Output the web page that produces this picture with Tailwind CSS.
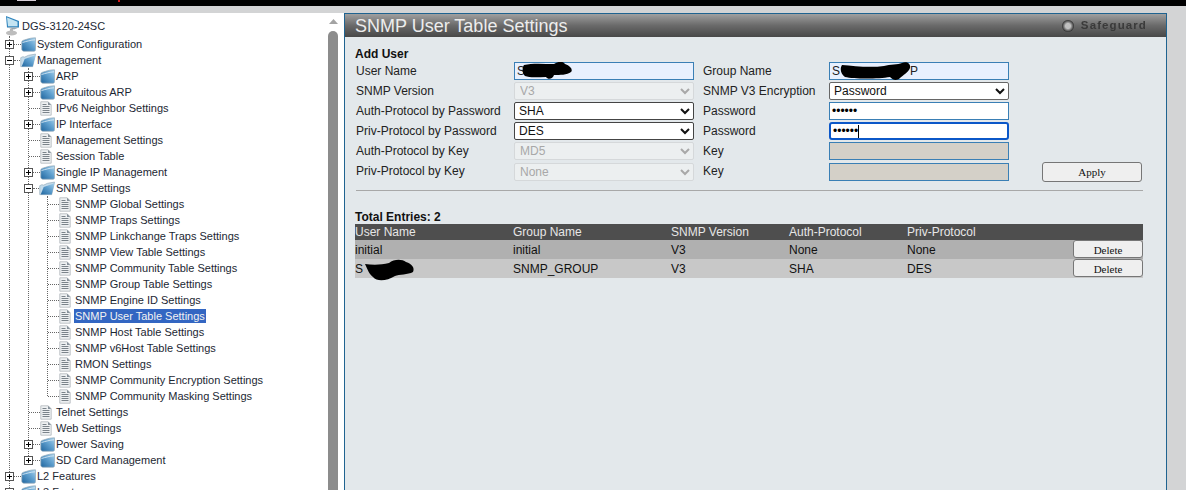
<!DOCTYPE html>
<html>
<head>
<meta charset="utf-8">
<script src="https://cdn.jsdelivr.net/npm/@tailwindcss/browser@4"></script>
</head>
<body class="w-[1186px] h-[490px] overflow-hidden bg-[#d3d4d5] font-['Liberation_Sans',Arial,sans-serif]">
<svg width="0" height="0" class="absolute">
  <defs>
    <linearGradient id="fg" x1="1" y1="0" x2="0" y2="1"><stop offset="0" stop-color="#a8d2ec"/><stop offset=".45" stop-color="#5f9fce"/><stop offset="1" stop-color="#1f659e"/></linearGradient>
    <symbol id="folder" viewBox="0 0 15 15"><path d="M.8 5C.8 3.500 3 3 5 2.500 8 1.500 11 .8 14.500.8V12.500C14.500 13.600 14 14.200 13 14.200H3C1.500 14.200.8 13.300.8 12z" fill="url(#fg)" stroke="#94a9b8" stroke-width=".7"/><path d="M1.500 5.500C5 4.500 10 3 14 2.800" fill="none" stroke="#d6e8f4" stroke-width=".9"/></symbol>
    <symbol id="open" viewBox="0 0 17 15"><path d="M.8 14V4.500L3 3.500l2 .4L9 2l7.500-1.300-3 13.300z" fill="#c4dbeb" stroke="#94a9b8" stroke-width=".7"/><path d="M1.800 14 5 6 16.500 1.800 13.500 14z" fill="url(#fg)"/></symbol>
    <symbol id="doc" viewBox="0 0 12 15"><path d="M.8.8h7.400l3 3v10.400H.8z" fill="#eef0f2" stroke="#b8bdc2" stroke-width=".9"/><path d="M8 .8v3.200h3.200z" fill="#87929b"/><path d="M2.500 3.500h4M2.500 5.500h7M2.500 7.500h7M2.500 9.500h7M2.500 11.500h7" stroke="#7a838a" stroke-width="1"/></symbol>
    <symbol id="plus" viewBox="0 0 9 9"><rect x=".5" y=".5" width="8" height="8" fill="#fff" stroke="#555"/><path d="M2 4.500h5M4.500 2v5" stroke="#000"/></symbol>
    <symbol id="minus" viewBox="0 0 9 9"><rect x=".5" y=".5" width="8" height="8" fill="#fff" stroke="#555"/><path d="M2 4.500h5" stroke="#000"/></symbol>
  </defs>
</svg>

<header class="h-[6px] bg-black flex items-start">
  <div class="ml-[17px] w-[19px] h-[1px] bg-[#d8cfd8]"></div>
  <div class="ml-[82px] w-[2px] h-[2px] bg-[#d01818]"></div>
</header>

<div class="flex h-[484px] pt-[7px]">
  <!-- tree -->
  <aside class="w-[328px] h-[477px] shrink-0 bg-white overflow-hidden text-[11px] text-[#1c2733] leading-4">
    <div class="h-[23px] flex items-center pl-[5px] pt-[3px]">
      <svg width="15" height="20" viewBox="0 0 15 20" class="shrink-0"><path d="M1 0 14 5v6.500H2z" fill="#2f84bd"/><path d="M2 1.500l10.500 4.200v4.500H3z" fill="#c4e4f2"/><path d="M2 11.500h12l-5 2z" fill="#9aa6ad"/><path d="M5 13h3v2H5z" fill="#b5b5b5"/><ellipse cx="6.500" cy="17" rx="5.500" ry="2.600" fill="#bdbdbd"/></svg>
      <span class="ml-[2px]">DGS-3120-24SC</span>
    </div>
    <div class="ml-[9px] border-l border-dotted border-[#666]">
      <div class="flex items-center h-4"><svg class="size-[9px] -ml-[5px] shrink-0"><use href="#plus"/></svg><i class="w-[7px] border-t border-dotted border-[#666]"></i><svg class="w-[15px] h-[15px] shrink-0"><use href="#folder"/></svg><span class="ml-px">System Configuration</span></div>
      <div class="flex items-center h-4"><svg class="size-[9px] -ml-[5px] shrink-0"><use href="#minus"/></svg><i class="w-[6px] border-t border-dotted border-[#666]"></i><svg class="w-[16px] h-[15px] shrink-0"><use href="#open"/></svg><span class="ml-px">Management</span></div>
      <div class="ml-[18px] border-l border-dotted border-[#666]">
        <div class="flex items-center h-4"><svg class="size-[9px] -ml-[5px] shrink-0"><use href="#plus"/></svg><i class="w-[7px] border-t border-dotted border-[#666]"></i><svg class="w-[15px] h-[15px] shrink-0"><use href="#folder"/></svg><span class="ml-px">ARP</span></div>
        <div class="flex items-center h-4"><svg class="size-[9px] -ml-[5px] shrink-0"><use href="#plus"/></svg><i class="w-[7px] border-t border-dotted border-[#666]"></i><svg class="w-[15px] h-[15px] shrink-0"><use href="#folder"/></svg><span class="ml-px">Gratuitous ARP</span></div>
        <div class="flex items-center h-4"><i class="w-[11px] border-t border-dotted border-[#666]"></i><svg class="w-[12px] h-[15px] shrink-0"><use href="#doc"/></svg><span class="ml-[4px]">IPv6 Neighbor Settings</span></div>
        <div class="flex items-center h-4"><svg class="size-[9px] -ml-[5px] shrink-0"><use href="#plus"/></svg><i class="w-[7px] border-t border-dotted border-[#666]"></i><svg class="w-[15px] h-[15px] shrink-0"><use href="#folder"/></svg><span class="ml-px">IP Interface</span></div>
        <div class="flex items-center h-4"><i class="w-[11px] border-t border-dotted border-[#666]"></i><svg class="w-[12px] h-[15px] shrink-0"><use href="#doc"/></svg><span class="ml-[4px]">Management Settings</span></div>
        <div class="flex items-center h-4"><i class="w-[11px] border-t border-dotted border-[#666]"></i><svg class="w-[12px] h-[15px] shrink-0"><use href="#doc"/></svg><span class="ml-[4px]">Session Table</span></div>
        <div class="flex items-center h-4"><svg class="size-[9px] -ml-[5px] shrink-0"><use href="#plus"/></svg><i class="w-[7px] border-t border-dotted border-[#666]"></i><svg class="w-[15px] h-[15px] shrink-0"><use href="#folder"/></svg><span class="ml-px">Single IP Management</span></div>
        <div class="flex items-center h-4"><svg class="size-[9px] -ml-[5px] shrink-0"><use href="#minus"/></svg><i class="w-[6px] border-t border-dotted border-[#666]"></i><svg class="w-[16px] h-[15px] shrink-0"><use href="#open"/></svg><span class="ml-px">SNMP Settings</span></div>
        <div class="ml-[18px] border-l border-dotted border-[#666]">
          <div class="flex items-center h-4"><i class="w-[11px] border-t border-dotted border-[#666]"></i><svg class="w-[12px] h-[15px] shrink-0"><use href="#doc"/></svg><span class="ml-[4px]">SNMP Global Settings</span></div>
          <div class="flex items-center h-4"><i class="w-[11px] border-t border-dotted border-[#666]"></i><svg class="w-[12px] h-[15px] shrink-0"><use href="#doc"/></svg><span class="ml-[4px]">SNMP Traps Settings</span></div>
          <div class="flex items-center h-4"><i class="w-[11px] border-t border-dotted border-[#666]"></i><svg class="w-[12px] h-[15px] shrink-0"><use href="#doc"/></svg><span class="ml-[4px]">SNMP Linkchange Traps Settings</span></div>
          <div class="flex items-center h-4"><i class="w-[11px] border-t border-dotted border-[#666]"></i><svg class="w-[12px] h-[15px] shrink-0"><use href="#doc"/></svg><span class="ml-[4px]">SNMP View Table Settings</span></div>
          <div class="flex items-center h-4"><i class="w-[11px] border-t border-dotted border-[#666]"></i><svg class="w-[12px] h-[15px] shrink-0"><use href="#doc"/></svg><span class="ml-[4px]">SNMP Community Table Settings</span></div>
          <div class="flex items-center h-4"><i class="w-[11px] border-t border-dotted border-[#666]"></i><svg class="w-[12px] h-[15px] shrink-0"><use href="#doc"/></svg><span class="ml-[4px]">SNMP Group Table Settings</span></div>
          <div class="flex items-center h-4"><i class="w-[11px] border-t border-dotted border-[#666]"></i><svg class="w-[12px] h-[15px] shrink-0"><use href="#doc"/></svg><span class="ml-[4px]">SNMP Engine ID Settings</span></div>
          <div class="flex items-center h-4"><i class="w-[11px] border-t border-dotted border-[#666]"></i><svg class="w-[12px] h-[15px] shrink-0"><use href="#doc"/></svg><span class="ml-[3px] px-px leading-[14px] bg-[#3366c2] text-[#f2f2f2]">SNMP User Table Settings</span></div>
          <div class="flex items-center h-4"><i class="w-[11px] border-t border-dotted border-[#666]"></i><svg class="w-[12px] h-[15px] shrink-0"><use href="#doc"/></svg><span class="ml-[4px]">SNMP Host Table Settings</span></div>
          <div class="flex items-center h-4"><i class="w-[11px] border-t border-dotted border-[#666]"></i><svg class="w-[12px] h-[15px] shrink-0"><use href="#doc"/></svg><span class="ml-[4px]">SNMP v6Host Table Settings</span></div>
          <div class="flex items-center h-4"><i class="w-[11px] border-t border-dotted border-[#666]"></i><svg class="w-[12px] h-[15px] shrink-0"><use href="#doc"/></svg><span class="ml-[4px]">RMON Settings</span></div>
          <div class="flex items-center h-4"><i class="w-[11px] border-t border-dotted border-[#666]"></i><svg class="w-[12px] h-[15px] shrink-0"><use href="#doc"/></svg><span class="ml-[4px]">SNMP Community Encryption Settings</span></div>
          <div class="relative flex items-center h-4"><b class="absolute -left-px top-[9px] bottom-0 w-px bg-white"></b><i class="w-[11px] border-t border-dotted border-[#666]"></i><svg class="w-[12px] h-[15px] shrink-0"><use href="#doc"/></svg><span class="ml-[4px]">SNMP Community Masking Settings</span></div>
        </div>
        <div class="flex items-center h-4"><i class="w-[11px] border-t border-dotted border-[#666]"></i><svg class="w-[12px] h-[15px] shrink-0"><use href="#doc"/></svg><span class="ml-[4px]">Telnet Settings</span></div>
        <div class="flex items-center h-4"><i class="w-[11px] border-t border-dotted border-[#666]"></i><svg class="w-[12px] h-[15px] shrink-0"><use href="#doc"/></svg><span class="ml-[4px]">Web Settings</span></div>
        <div class="flex items-center h-4"><svg class="size-[9px] -ml-[5px] shrink-0"><use href="#plus"/></svg><i class="w-[7px] border-t border-dotted border-[#666]"></i><svg class="w-[15px] h-[15px] shrink-0"><use href="#folder"/></svg><span class="ml-px">Power Saving</span></div>
        <div class="relative flex items-center h-4"><b class="absolute -left-px top-[13px] bottom-0 w-px bg-white"></b><svg class="size-[9px] -ml-[5px] shrink-0"><use href="#plus"/></svg><i class="w-[7px] border-t border-dotted border-[#666]"></i><svg class="w-[15px] h-[15px] shrink-0"><use href="#folder"/></svg><span class="ml-px">SD Card Management</span></div>
      </div>
      <div class="flex items-center h-4"><svg class="size-[9px] -ml-[5px] shrink-0"><use href="#plus"/></svg><i class="w-[7px] border-t border-dotted border-[#666]"></i><svg class="w-[15px] h-[15px] shrink-0"><use href="#folder"/></svg><span class="ml-px">L2 Features</span></div>
      <div class="flex items-center h-4"><svg class="size-[9px] -ml-[5px] shrink-0"><use href="#plus"/></svg><i class="w-[7px] border-t border-dotted border-[#666]"></i><svg class="w-[15px] h-[15px] shrink-0"><use href="#folder"/></svg><span class="ml-px">L3 Features</span></div>
    </div>
  </aside>

  <!-- scrollbar -->
  <div class="w-[16px] h-[477px] shrink-0 bg-white">
    <div class="w-[10px] h-full flex flex-col items-center">
      <svg width="9" height="5" viewBox="0 0 9 5" class="mt-[6px]"><path d="M4.500 0l4.500 5H0z" fill="#a3a3a3"/></svg>
      <div class="mt-[7px] w-[10px] flex-1 bg-[#8c8c8c] rounded-t-full"></div>
    </div>
  </div>

  <!-- main -->
  <main class="w-[823px] h-[477px] shrink-0 border border-b-0 border-[#1f6390] bg-[#e3e8eb] text-[12px] text-[#222] overflow-hidden">
    <div class="h-[23px] flex items-center pl-[10px] pr-[19px] bg-gradient-to-b from-[#a0a0a0] via-[#6a6a6a] to-[#484848]">
      <h1 class="text-[18px] text-[#ededed] leading-[22px]">SNMP User Table Settings</h1>
      <div class="ml-auto flex items-center gap-[7px]">
        <span class="size-[12px] rounded-full bg-[radial-gradient(circle,#c0c0c0_30%,#2e2e2e_70%)]"></span>
        <span class="text-[11.500px] font-bold text-[#3a3a3a] tracking-[1.100px] blur-[.4px]">Safeguard</span>
      </div>
    </div>

    <section class="pl-[10px] pr-[23px]">
      <h2 class="mt-[10px] h-[14px] leading-[14px] font-bold text-[#111]">Add User</h2>
      <div class="grid grid-cols-[159px_180px_135px_180px_33px_100px] auto-rows-[20px] items-center">
        <span class="pl-px">User Name</span>
        <div class="relative h-[18px]"><input value="S" class="w-full h-full px-[2px] bg-[#e8f0fe] border border-[#3a7fb5] outline-none"><svg class="absolute left-[8px] top-0 w-[50px] h-[18px]" viewBox="0 0 50 18"><path d="M2 3C10 1 22 2 32 2 37-1 41-1 43 2 49 4 51 8 49 10 45 13 38 13 32 13 31 17 26 18 24 15 16 15 8 16 3 14 0 11 0 6 2 3z" fill="#000"/></svg></div>
        <span class="pl-[9px]">Group Name</span>
        <div class="relative h-[18px]"><input value="S                     P" class="w-full h-full px-[2px] bg-[#e8f0fe] border border-[#3a7fb5] outline-none"><svg class="absolute left-[11px] top-0 w-[72px] h-[19px]" viewBox="0 0 72 19"><path d="M2 3C14 4 30 6 44 4 50 2 58 3 62 1 67-1 71 2 70 6 68 11 63 13 60 16 56 20 52 17 50 15 38 17 14 17 5 15 0 11 0 6 2 3z" fill="#000"/></svg></div>
        <span></span><span></span>

        <span class="pl-px">SNMP Version</span>
        <select disabled class="w-full h-[18px] pl-px bg-[#eceff0] text-[#a8a8a8] border border-[#d5d8da] rounded-[2px]"><option>V3</option></select>
        <span class="pl-[9px]">SNMP V3 Encryption</span>
        <select class="w-full h-[18px] bg-white text-[#111] border border-[#666] rounded-[2px]"><option>Password</option></select>
        <span></span><span></span>

        <span class="pl-px">Auth-Protocol by Password</span>
        <select class="w-full h-[18px] bg-white text-[#111] border border-[#444] rounded-[2px]"><option>SHA</option></select>
        <span class="pl-[9px]">Password</span>
        <input type="password" value="secret" class="w-full h-[18px] px-[2px] bg-white text-black border border-[#3a7fb5] outline-none">
        <span></span><span></span>

        <span class="pl-px">Priv-Protocol by Password</span>
        <select class="w-full h-[18px] bg-white text-[#111] border border-[#444] rounded-[2px]"><option>DES</option></select>
        <span class="pl-[9px]">Password</span>
        <div class="flex items-center w-full h-[18px] px-[2px] bg-white text-black border-2 border-[#0b57c8] rounded-[3px]"><input type="password" value="secret" class="w-[26px] h-[14px] outline-none bg-transparent"><i class="-ml-[1px] h-[13px] w-px bg-black"></i></div>
        <span></span><span></span>

        <span class="pl-px">Auth-Protocol by Key</span>
        <select disabled class="w-full h-[18px] pl-px bg-[#eceff0] text-[#a8a8a8] border border-[#d5d8da] rounded-[2px]"><option>MD5</option></select>
        <span class="pl-[9px]">Key</span>
        <input disabled class="w-full h-[18px] bg-[#d4d0c8] border border-[#3a7fb5]">
        <span></span><span></span>

        <span class="pl-px">Priv-Protocol by Key</span>
        <select disabled class="w-full h-[18px] mt-[2px] pl-px bg-[#eceff0] text-[#a8a8a8] border border-[#d5d8da] rounded-[2px]"><option>None</option></select>
        <span class="pl-[9px]">Key</span>
        <input disabled class="w-full h-[18px] mt-[2px] bg-[#d4d0c8] border border-[#3a7fb5]">
        <span></span>
        <button class="h-[20px] mt-[2px] pt-px bg-[#efefef] border border-[#767676] rounded-[3px] font-['Liberation_Serif',serif] text-[11px] text-[#111]">Apply</button>
      </div>

      <hr class="mt-[9px] h-[2px] border-0 border-t border-[#a8a8a8] ml-px">

      <h2 class="mt-[18px] h-[14px] leading-[14px] font-bold text-[#111]">Total Entries: 2</h2>

      <table class="w-[788px] table-fixed border-collapse leading-[16px]">
        <colgroup><col class="w-[158px]"><col class="w-[158px]"><col class="w-[118px]"><col class="w-[118px]"><col class="w-[166px]"><col class="w-[70px]"></colgroup>
        <thead>
          <tr class="h-[16px] bg-[#4e4e4e] text-[#e6e6e6] text-left">
            <th class="p-0 font-normal">User Name</th><th class="p-0 font-normal">Group Name</th><th class="p-0 font-normal">SNMP Version</th><th class="p-0 font-normal">Auth-Protocol</th><th class="p-0 font-normal">Priv-Protocol</th><th class="p-0"></th>
          </tr>
        </thead>
        <tbody>
          <tr class="h-[19px] bg-[#b0b0b0] text-[#111]">
            <td>initial</td><td>initial</td><td>V3</td><td>None</td><td>None</td>
            <td class="align-top"><button class="block w-full h-[18px] pt-px bg-[#efefef] border border-[#767676] rounded-[3px] font-['Liberation_Serif',serif] text-[11px] text-[#111]">Delete</button></td>
          </tr>
          <tr class="h-[19px] bg-[#c8c8c8] text-[#111]">
            <td class="relative">S<svg class="absolute left-[10px] top-[1px] w-[49px] h-[21px] overflow-visible" viewBox="0 0 49 21"><path d="M0 4C8 5 16 5 24 3 29-1 37-1 41 2 47 4 50 8 48 12 43 15 34 14 30 16 22 21 12 22 8 17 4 14 3 10 0 4z" fill="#000"/></svg></td><td>SNMP_GROUP</td><td>V3</td><td>SHA</td><td>DES</td>
            <td class="align-top"><button class="block w-full h-[18px] pt-px bg-[#efefef] border border-[#767676] rounded-[3px] font-['Liberation_Serif',serif] text-[11px] text-[#111]">Delete</button></td>
          </tr>
        </tbody>
      </table>
    </section>
  </main>
</div>
</body>
</html>
